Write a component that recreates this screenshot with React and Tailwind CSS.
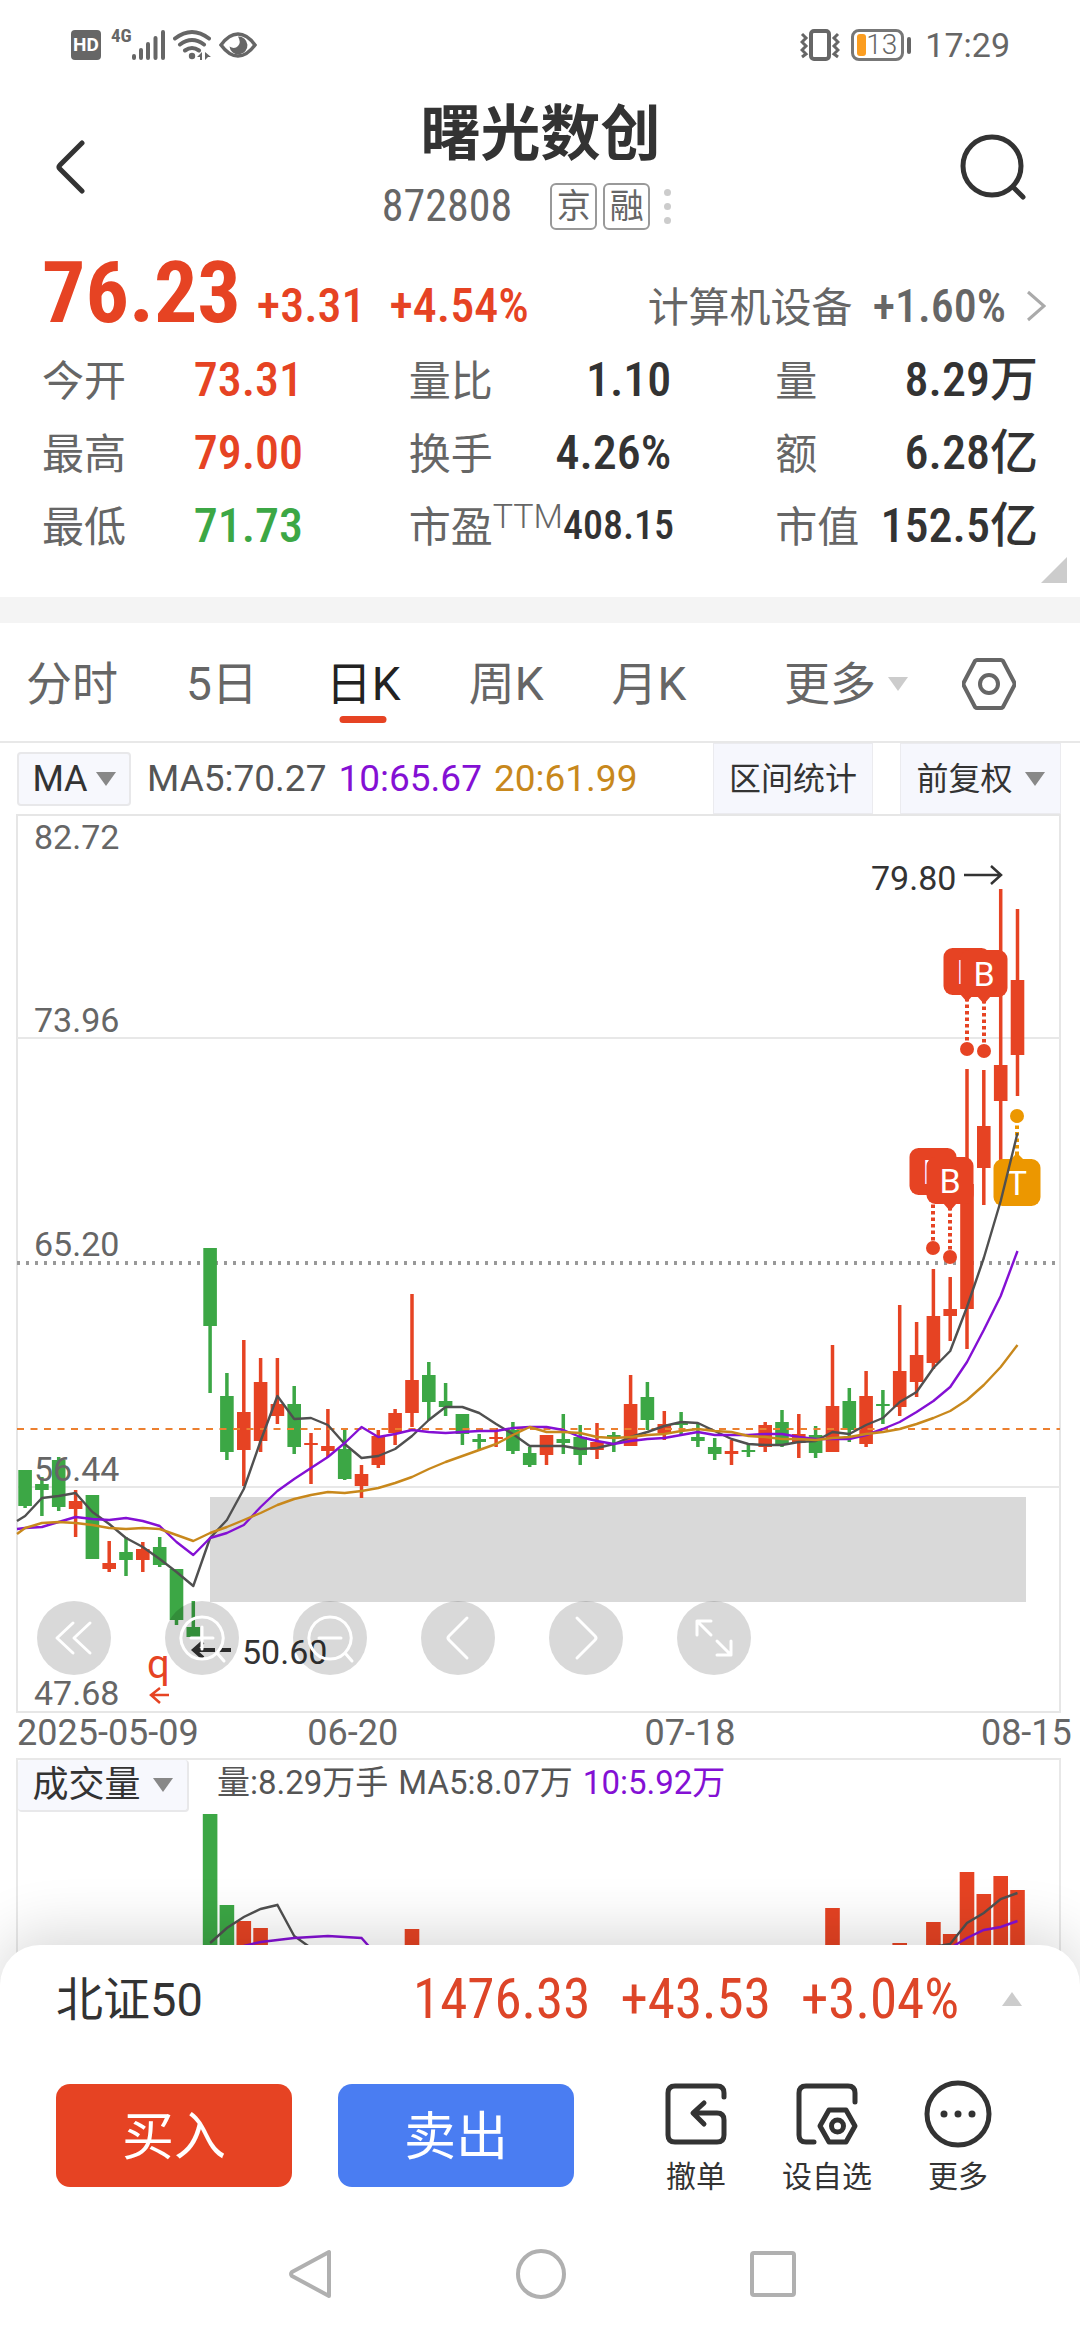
import { useState } from "react";

const RED = "#e64323";
const GREEN = "#3ca745";

// [up, high, bodyTop, bodyBottom, low] in chart units, oldest day first
const candles = [
  [0, 656, 656, 692, 694], [0, 663, 670, 676, 702], [0, 643, 646, 693, 697], [1, 676, 687, 695, 723],
  [0, 681, 681, 745, 745], [1, 727, 749, 755, 758], [0, 723, 738, 746, 762], [1, 728, 735, 746, 758],
  [0, 723, 733, 751, 753], [0, 755, 755, 806, 811], [0, 787, 813, 823, 823], [0, 434, 434, 512, 579],
  [0, 559, 582, 638, 646], [1, 526, 598, 636, 672], [1, 544, 568, 627, 638], [1, 544, 590, 602, 610],
  [0, 572, 590, 633, 640], [1, 619, 629, 631, 670], [1, 595, 632, 637, 643], [0, 615, 635, 665, 666],
  [1, 651, 660, 672, 684], [1, 616, 622, 651, 654], [1, 595, 599, 619, 631], [1, 480, 566, 599, 613],
  [0, 548, 561, 588, 606], [0, 569, 587, 593, 602], [0, 600, 600, 620, 631], [0, 620, 625, 628, 636],
  [1, 614, 623, 624, 633], [0, 608, 616, 637, 640], [0, 633, 639, 651, 653], [1, 621, 621, 641, 651],
  [0, 600, 625, 629, 640], [0, 611, 623, 641, 651], [1, 609, 628, 636, 645], [0, 618, 621, 623, 638],
  [1, 561, 590, 632, 632], [0, 568, 583, 606, 616], [1, 597, 610, 619, 626], [0, 598, 609, 610, 621],
  [0, 610, 623, 627, 633], [0, 624, 633, 640, 646], [1, 626, 637, 640, 651], [0, 629, 636, 638, 643],
  [1, 608, 611, 633, 638], [0, 596, 608, 631, 633], [1, 600, 620, 629, 644], [0, 612, 621, 639, 644],
  [1, 531, 592, 638, 638], [0, 574, 587, 616, 628], [1, 557, 582, 630, 633], [0, 576, 590, 591, 610],
  [1, 491, 557, 593, 602], [1, 508, 541, 568, 583], [1, 455, 502, 549, 555], [1, 463, 495, 502, 527],
  [1, 255, 370, 495, 535], [1, 256, 312, 354, 391], [1, 75, 251, 287, 346], [1, 95, 166, 241, 282],
];

const ma5 = [
  702, 684, 682, 679, 698, 710, 724, 733, 745, 758, 772, 724, 706, 675, 627, 582, 605, 604, 611, 630,
  644, 642, 635, 622, 606, 593, 593, 599, 610, 620, 632, 632, 632, 635, 634, 630, 623, 618, 612, 608,
  609, 617, 625, 630, 631, 631, 628, 627, 618, 620, 611, 604, 588, 578, 554, 537, 493, 444, 387, 319,
];
const ma10 = [
  714, 713, 708, 703, 705, 706, 704, 707, 712, 728, 741, 724, 719, 711, 693, 677, 665, 654, 643, 629,
  613, 623, 620, 616, 618, 619, 618, 617, 617, 614, 613, 613, 616, 623, 627, 630, 627, 625, 624, 621,
  618, 621, 621, 621, 620, 620, 623, 625, 625, 625, 621, 615, 608, 598, 587, 573, 548, 516, 482, 437,
];
const ma20 = [
  714, 709, 708, 709, 711, 714, 715, 714, 715, 721, 727, 719, 713, 706, 699, 691, 685, 681, 678, 679,
  677, 674, 669, 663, 655, 648, 642, 636, 630, 621, 613, 618, 618, 619, 623, 624, 623, 621, 620, 617,
  615, 617, 618, 622, 623, 625, 625, 626, 624, 623, 620, 618, 615, 610, 604, 597, 586, 571, 553, 531,
];

const cx = (i) => Math.round((25.1 + i * 16.82) * 10) / 10;
const line = (ys, start = 0) => ys.map((y, i) => `${cx(i + start)},${y}`).join(" ");

const axis = [
  ["82.72", 35],
  ["73.96", 218],
  ["65.20", 442],
  ["56.44", 667],
  ["47.68", 891],
];

const pins = [
  { x: 967, y: 134, dot: 235, label: "B" },
  { x: 984, y: 136, dot: 237, label: "B" },
  { x: 933, y: 334, dot: 434, label: "B" },
  { x: 950, y: 343, dot: 443, label: "B" },
];

// [day index, bar top]
const volumes = [
  [11, 54], [12, 145], [13, 161], [14, 168], [23, 169], [48, 148], [52, 183], [53, 185],
  [54, 162], [55, 174], [56, 112], [57, 134], [58, 116], [59, 130],
];

function Caret({ className }) {
  return (
    <svg className={className} width="20" height="14" viewBox="0 0 20 14" aria-hidden="true">
      <path d="M0 0h20L10 14z" fill="currentColor" />
    </svg>
  );
}

function StatusBar() {
  return (
    <div className="flex h-[90px] items-center pl-[71px] pr-[70px] text-[#666]">
      <span className="flex h-[30px] w-[30px] items-center justify-center rounded-[4px] bg-[#666] text-[19px] font-bold text-white">HD</span>
      <span className="ml-[10px] self-start pt-[27px] text-[19px] leading-[18px] font-bold font-['Roboto_Condensed']">4G</span>
      <svg width="33" height="32" viewBox="0 0 33 32" stroke="currentColor" strokeWidth="4" strokeLinecap="round" aria-hidden="true">
        <path d="M2 29v-2M9 29v-8M16 29v-14M23.500 29V9M31 29V3" />
      </svg>
      <svg className="ml-2" width="38" height="32" viewBox="0 0 38 32" fill="none" stroke="currentColor" strokeWidth="4" aria-hidden="true">
        <path d="M2 9.500q17-13 34 0M7 15.500q12-9 24 0M12 21.500q7-5 14 0" strokeLinecap="round" />
        <circle cx="19" cy="27" r="3.200" fill="currentColor" stroke="none" />
        <path d="M29 23v8h-2v-3h-3zM32 23l6 5h-3l-3 3z" fill="currentColor" stroke="none" />
      </svg>
      <svg className="ml-2" width="38" height="26" viewBox="0 0 38 26" aria-hidden="true">
        <path d="M2 13Q10 2 19 2T36 13Q28 24 19 24T2 13z" fill="none" stroke="currentColor" strokeWidth="3.500" />
        <path d="M19 4.500a9 9 0 1 1-8.500 10q5 3 8.500-.500t0-9.500z" fill="currentColor" />
      </svg>
      <svg className="ml-auto" width="40" height="32" viewBox="0 0 40 32" fill="none" stroke="currentColor" strokeWidth="4" aria-hidden="true">
        <rect x="11" y="2" width="18" height="28" rx="3" />
        <path d="M2 5l4 4-4 4 4 4-4 4 4 4-4 3M38 5l-4 4 4 4-4 4 4 4-4 4 4 3" strokeWidth="3" />
      </svg>
      <span className="ml-[11px] flex h-8 w-[53px] items-center rounded-[8px] border-[3px] border-[#777] pl-[3px]">
        <span className="h-[22px] w-[9px] rounded-[3px] bg-[#fb9d20]" />
        <span className="text-[28px] leading-none font-light">13</span>
      </span>
      <span className="ml-[3px] h-[17px] w-1 rounded-full bg-[#666]" />
      <span className="ml-[14px] text-[34px] leading-none">17:29</span>
    </div>
  );
}

function Header() {
  return (
    <header className="flex h-[154px] items-center justify-between pl-[55px] pr-[54px]">
      <button aria-label="返回" className="w-[66px] text-[#333]">
        <svg width="30" height="54" viewBox="0 0 30 54" fill="none" stroke="currentColor" strokeWidth="5" strokeLinecap="round" strokeLinejoin="round">
          <path d="M27 3L5 25q-2 2 0 4l22 22" />
        </svg>
      </button>
      <div className="flex flex-col items-center">
        <h1 className="text-[60px] leading-[78px] font-bold text-[#333]">曙光数创</h1>
        <div className="flex h-[64px] items-center pr-7 text-[#666]">
          <span className="mr-[38px] text-[44px] leading-none font-['Roboto_Condensed']">872808</span>
          <span className="mr-[6px] flex h-[47px] w-[47px] items-center justify-center rounded-[6px] border-2 border-[#999] text-[34px] leading-none">京</span>
          <span className="mr-[14px] flex h-[47px] w-[47px] items-center justify-center rounded-[6px] border-2 border-[#999] text-[34px] leading-none">融</span>
          <span className="flex flex-col gap-[7px]">
            <i className="h-[7px] w-[7px] rounded-full bg-[#ccc]" />
            <i className="h-[7px] w-[7px] rounded-full bg-[#ccc]" />
            <i className="h-[7px] w-[7px] rounded-full bg-[#ccc]" />
          </span>
        </div>
      </div>
      <button aria-label="搜索" className="text-[#333]">
        <svg width="66" height="66" viewBox="0 0 66 66" fill="none" stroke="currentColor" strokeWidth="5" strokeLinecap="round">
          <circle cx="32" cy="32" r="29" />
          <path d="M53 53l10 10" />
        </svg>
      </button>
    </header>
  );
}

function Stat({ label, value, sup, className = "text-[48px]" }) {
  return (
    <div className="flex h-[73px] items-center justify-between whitespace-nowrap">
      <dt className="flex pt-1 text-[42px] leading-none text-[#666]">
        {label}
        {sup && <sup className="top-0 -mt-2 text-[34px] leading-none font-light">{sup}</sup>}
      </dt>
      <dd className={`font-['Roboto_Condensed','Noto_Sans_CJK_SC',sans-serif] font-medium leading-none ${className}`}>{value}</dd>
    </div>
  );
}

function Quote() {
  return (
    <section className="relative h-[353px] px-[42px]">
      <div className="flex h-[99px] items-baseline font-['Roboto_Condensed','Noto_Sans_CJK_SC',sans-serif] font-medium text-[#e64323]">
        <strong className="text-[86px] leading-[98px] font-bold">76.23</strong>
        <span className="ml-4 text-[48px]">+3.31</span>
        <span className="ml-6 text-[48px]">+4.54%</span>
        <a href="#sector" className="ml-auto flex items-baseline text-[#666]">
          <span className="text-[41px] font-normal">计算机设备</span>
          <span className="ml-5 text-[46px]">+1.60%</span>
          <svg className="-mr-2 ml-5" width="20" height="32" viewBox="0 0 20 32" fill="none" stroke="#aaa" strokeWidth="3">
            <path d="M2 2l16 14L2 30" />
          </svg>
        </a>
      </div>
      <dl className="grid grid-cols-3 gap-x-[104px] text-[#333]">
        <Stat label="今开" value="73.31" className="w-[111px] text-[48px] text-[#e64323]" />
        <Stat label="量比" value="1.10" />
        <Stat label="量" value="8.29万" />
        <Stat label="最高" value="79.00" className="w-[111px] text-[48px] text-[#e64323]" />
        <Stat label="换手" value="4.26%" />
        <Stat label="额" value="6.28亿" />
        <Stat label="最低" value="71.73" className="w-[111px] text-[48px] text-[#3ca745]" />
        <Stat label="市盈" sup="TTM" value="408.15" className="text-[40px]" />
        <Stat label="市值" value="152.5亿" />
      </dl>
      <svg className="absolute right-[13px] bottom-[14px]" width="26" height="26" viewBox="0 0 26 26" aria-hidden="true">
        <path d="M26 0v26H0z" fill="#ccc" />
      </svg>
    </section>
  );
}

function Tabs() {
  const [active, setActive] = useState("日K");
  return (
    <nav className="flex h-[120px] items-center gap-[68px] border-b-2 border-[#e8e8e8] pt-1 pl-[26px] pr-[64px] text-[46px] leading-none text-[#666]">
      {["分时", "5日", "日K", "周K", "月K"].map((t) => (
        <button key={t} onClick={() => setActive(t)} className={t === active ? "relative text-[#222]" : "relative"}>
          {t}
          {t === active && <span className="absolute -bottom-4 left-1/2 h-[7px] w-[47px] -translate-x-1/2 rounded-full bg-[#e64323]" />}
        </button>
      ))}
      <button className="ml-auto flex items-center gap-3">
        更多
        <Caret className="text-[#ccc]" />
      </button>
      <button aria-label="设置" className="-ml-[14px]">
        <svg width="54" height="52" viewBox="0 0 54 52" fill="none" stroke="currentColor" strokeWidth="4" strokeLinejoin="round">
          <path d="M15 2h24q1 0 2 1l11 21q1 2 0 4L41 49q-1 1-2 1H15q-1 0-2-1L2 28q-1-2 0-4L13 3q1-1 2-1z" />
          <circle cx="27" cy="26" r="9" />
        </svg>
      </button>
    </nav>
  );
}

function Toolbar() {
  return (
    <div className="flex h-[71px] items-stretch pl-[17px] pr-[19px] text-[#333]">
      <button className="mr-4 flex h-[54px] w-[114px] items-center justify-center gap-2 self-center rounded-[4px] border-2 border-[#e8e8ea] bg-[#f7f8fd] text-[36px]">
        MA
        <Caret className="text-[#888]" />
      </button>
      <p className="flex items-center gap-3 text-[37px] leading-none">
        <span className="text-[#555]">MA5:70.27</span>
        <span className="text-[#8410d4]">10:65.67</span>
        <span className="text-[#c8881c]">20:61.99</span>
      </p>
      <button className="ml-auto w-[160px] border border-[#ebebef] bg-[#f6f7fd] text-[32px]">区间统计</button>
      <button className="ml-[27px] flex w-[161px] items-center justify-center gap-3 border border-[#ebebef] bg-[#f6f7fd] text-[32px]">
        前复权
        <Caret className="text-[#888]" />
      </button>
    </div>
  );
}

function Pin({ x, y, dot, label, color = RED, up }) {
  return (
    <g>
      <line x1={x} x2={x} y1={up ? y - 4 : y + 50} y2={dot} stroke={color} strokeWidth="4" strokeDasharray="3.500 3" />
      <circle cx={x} cy={dot} r="7" fill={color} />
      <path d={up ? `M${x - 7} ${y + 1}l7 -7l7 7z` : `M${x - 7} ${y + 46}l7 8l7 -8z`} fill={color} />
      <rect x={x - 23.5} y={y} width="47" height="47" rx="9" fill={color} />
      <text x={x} y={y + 36} textAnchor="middle" fontSize="34" fill="#fff">{label}</text>
    </g>
  );
}

function KLine() {
  return (
    <svg className="block w-full" viewBox="0 0 1080 900" fontFamily="Roboto, sans-serif" role="img" aria-label="日K">
      <path d="M17 898V1H1060V898z" fill="none" stroke="#e6e6e6" strokeWidth="2" />
      <path d="M17 224H1060M17 673H1060" stroke="#e8e8e8" strokeWidth="2" />
      <rect x="210" y="683" width="816" height="105" fill="#d9d9d9" />
      <path d="M17 449H1060" stroke="#999" strokeWidth="4" strokeDasharray="3 6" />
      {candles.map(([up, h, t, b, l], i) => (
        <g key={i} fill={up ? RED : GREEN}>
          <rect x={cx(i) - 1.75} y={h} width="3.5" height={l - h} />
          <rect x={cx(i) - 6.8} y={t} width="13.6" height={Math.max(b - t, 2)} />
        </g>
      ))}
      <path d="M17 615H1060" stroke="#ec8030" strokeWidth="2" strokeDasharray="7 6.500" />
      {pins.map((p) => (
        <Pin key={p.x} {...p} />
      ))}
      <Pin x={1017} y={345} dot={302} label="T" color="#ec9700" up />
      <g fill="none" strokeWidth="2.4" strokeLinejoin="round">
        <polyline points={"17,707 " + line(ma5)} stroke="#505050" />
        <polyline points={"17,715 " + line(ma10)} stroke="#8410d4" />
        <polyline points={"17,720 " + line(ma20)} stroke="#c8881c" />
      </g>
      <g fontSize="34" fill="#666">
        {axis.map(([v, y]) => (
          <text key={v} x="34" y={y}>{v}</text>
        ))}
      </g>
      <g fontSize="34" fill="#333">
        <text x="871" y="76">79.80</text>
        <text x="242" y="850">50.60</text>
      </g>
      <g fill="none" stroke="#333">
        <path d="M964 61h37M991 52l10 9l-10 9" strokeWidth="2.500" />
        <path d="M231 836h-12m-4 0h-20M203 828l-9 8l9 8" strokeWidth="4" />
      </g>
      <text x="147" y="864" fontSize="40" fill={RED}>q</text>
      <path d="M169 881h-18M160 874l-9 7l9 8" fill="none" stroke={RED} strokeWidth="2.500" />
    </svg>
  );
}

const controls = [
  ["最早", "M36 22L20 37L36 52M53 22L37 37L53 52"],
  ["放大", "M37 16a21 21 0 1 0 .1 0zM52 52l7 8M26 37h22M37 26v22"],
  ["缩小", "M37 16a21 21 0 1 0 .1 0zM52 52l7 8M26 37h22"],
  ["向前", "M46 17L28 35q-2 2 0 4L46 57"],
  ["向后", "M28 17L46 35q2 2 0 4L28 57"],
  ["全屏", "M34 20H20V34M20 20L34 34M40 40L54 54M54 40V54H40"],
];

function Chart() {
  return (
    <div className="relative">
      <KLine />
      <div className="absolute bottom-[39px] left-[37px] flex gap-[54px]">
        {controls.map(([name, d]) => (
          <button key={name} aria-label={name} className="h-[74px] w-[74px] rounded-full bg-black/15">
            <svg viewBox="0 0 74 74" fill="none" stroke="#fff" strokeWidth="3" strokeLinecap="round" strokeLinejoin="round">
              <path d={d} />
            </svg>
          </button>
        ))}
      </div>
    </div>
  );
}

function Volume() {
  return (
    <section className="relative ml-4 mr-[19px] border-2 border-b-0 border-[#e8e8e8]">
      <div className="flex h-[54px] items-start text-[33px] leading-[46px]">
        <button className="mr-[28px] flex h-[52px] w-[171px] items-center justify-center gap-3 rounded-[4px] border-2 border-t-0 border-l-0 border-[#e8e8ea] bg-[#f7f8fd] text-[36px] text-[#333]">
          成交量
          <Caret className="text-[#888]" />
        </button>
        <span className="mr-[10px] text-[#555]">量:8.29万手</span>
        <span className="mr-[10px] text-[#555]">MA5:8.07万</span>
        <span className="text-[#8410d4]">10:5.92万</span>
      </div>
      <svg className="block w-full" viewBox="18 54 1041 172" role="img" aria-label="成交量">
        {volumes.map(([i, y]) => (
          <rect key={i} x={cx(i) - 7.3} y={y} width="14.6" height={226 - y} fill={i < 13 ? GREEN : RED} />
        ))}
        <g fill="none" strokeWidth="2.4">
          <polyline points={line([183, 168, 157, 149, 145, 176, 188, 200, 226], 11)} stroke="#505050" />
          <polyline points={line([186, 182, 180, 178, 177, 176, 177, 178, 197], 13)} stroke="#8410d4" />
          <polyline points={line([187, 184, 163, 153, 139, 133], 54)} stroke="#505050" />
          <polyline points={line([188, 178, 170, 167, 161], 55)} stroke="#8410d4" />
        </g>
      </svg>
    </section>
  );
}

const action = "flex flex-col items-center gap-[11px] text-[30px] leading-[36px] text-[#333]";

function Sheet() {
  return (
    <section className="relative -mt-[41px] rounded-t-[40px] bg-white px-[56px] pb-[54px] shadow-[0_-10px_60px_rgba(0,0,0,0.16)]">
      <div className="flex h-[108px] items-center">
        <span className="text-[47px] leading-none text-[#333]">北证50</span>
        <p className="ml-auto flex gap-[30px] text-[55px] leading-none font-['Roboto_Condensed'] text-[#dd4528]">
          <span>1476.33</span>
          <span>+43.53</span>
          <span>+3.04%</span>
        </p>
        <Caret className="ml-[41px] w-6 rotate-180 text-[#ccc]" />
      </div>
      <div className="flex items-start pt-[31px]">
        <button className="h-[103px] w-[236px] rounded-[14px] bg-[#e64323] pt-1 text-[52px] text-white">买入</button>
        <button className="ml-[46px] h-[103px] w-[236px] rounded-[14px] bg-[#4a7df2] pt-1 text-[52px] text-white">卖出</button>
        <div className="-mt-1 ml-auto flex gap-[52px] pr-8">
          <button className={action}>
            <svg width="68" height="68" viewBox="0 0 68 68" fill="none" stroke="currentColor" strokeWidth="5" strokeLinecap="round" strokeLinejoin="round">
              <path d="M62 17V13q0-7-7-7H13q-7 0-7 7V55q0 7 7 7H55q7 0 7-7V40q0-7-7-7H32M42 23L31 33L42 44" />
            </svg>
            撤单
          </button>
          <button className={action}>
            <svg width="68" height="68" viewBox="0 0 68 68" fill="none" stroke="currentColor" strokeWidth="5" strokeLinecap="round" strokeLinejoin="round">
              <path d="M62 22V13q0-7-7-7H13q-7 0-7 7V55q0 7 7 7H21M36 30H53L62 46L53 62H36L27 46z" />
              <circle cx="44.500" cy="46" r="6" />
            </svg>
            设自选
          </button>
          <button className={action}>
            <svg width="68" height="68" viewBox="0 0 68 68" fill="currentColor">
              <circle cx="34" cy="34" r="31" fill="none" stroke="currentColor" strokeWidth="5" />
              <circle cx="20" cy="34" r="3.500" />
              <circle cx="34" cy="34" r="3.500" />
              <circle cx="48" cy="34" r="3.500" />
            </svg>
            更多
          </button>
        </div>
      </div>
    </section>
  );
}

function NavBar() {
  return (
    <div className="relative flex items-center justify-center gap-[184px] bg-white pb-9 pl-1 text-[#b0b0b0]">
      <button aria-label="后退">
        <svg width="44" height="50" viewBox="0 0 44 50" fill="none" stroke="currentColor" strokeWidth="4" strokeLinejoin="round">
          <path d="M41 3V47L4 27q-2-2 0-4z" />
        </svg>
      </button>
      <button aria-label="主页">
        <svg width="50" height="50" viewBox="0 0 50 50" fill="none" stroke="currentColor" strokeWidth="4">
          <circle cx="25" cy="25" r="23" />
        </svg>
      </button>
      <button aria-label="最近任务">
        <svg width="46" height="46" viewBox="0 0 46 46" fill="none" stroke="currentColor" strokeWidth="4">
          <rect x="2" y="2" width="42" height="42" rx="2" />
        </svg>
      </button>
    </div>
  );
}

export default function App() {
  return (
    <div className="min-h-screen bg-white font-['Roboto','Noto_Sans_CJK_SC',sans-serif]">
      <StatusBar />
      <Header />
      <Quote />
      <div className="h-[26px] bg-[#f4f4f4]" />
      <Tabs />
      <Toolbar />
      <Chart />
      <div className="grid h-[44px] grid-cols-[290fr_337fr_336fr_99fr] items-start pl-[17px] text-[36px] leading-[38px] text-[#666]">
        <time>2025-05-09</time>
        <time>06-20</time>
        <time>07-18</time>
        <time>08-15</time>
      </div>
      <Volume />
      <Sheet />
      <NavBar />
    </div>
  );
}
